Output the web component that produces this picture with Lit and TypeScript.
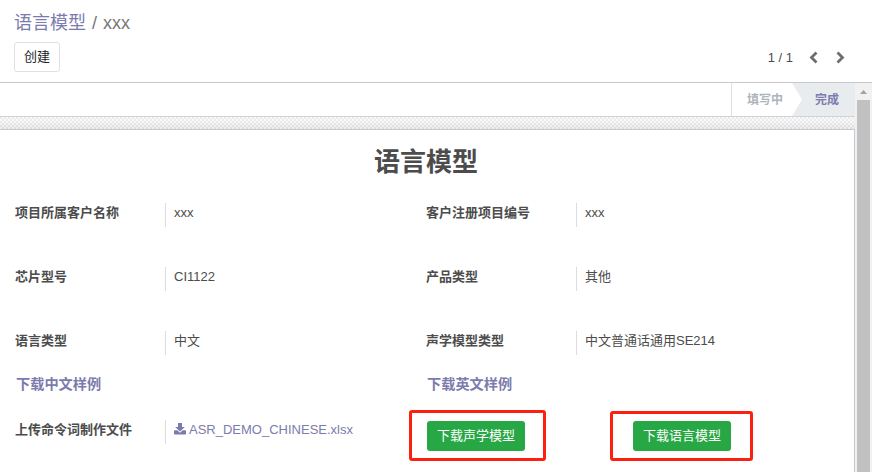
import { LitElement, html, css, nothing } from "lit";
import { customElement, property } from "lit/decorators.js";

@customElement("form-field")
class FormField extends LitElement {
  @property() label = "";
  @property() value = "";
  @property({ type: Boolean }) file = false;

  static styles = css`
    :host { display: flex; height: 24px; line-height: 19px; font-size: 13px; color: #4c4c4c; }
    .label { width: 150px; flex: none; font-weight: bold; white-space: nowrap; }
    .value { border-left: 1px solid #ddd; padding-left: 8px; white-space: nowrap; }
    .link { color: #7c7bad; display: flex; }
    .icon { width: 12px; height: 12px; margin: 3px 3px 0 0; fill: currentColor; }
  `;

  render() {
    return html`
      <div class="label">${this.label}</div>
      <div class="value ${this.file ? "link" : ""}">
        ${this.file
          ? html`<svg class="icon" viewBox="0 0 12 12">
              <path d="M4 0h4v4h2.9L6 8.6 1.1 4H4zM.6 7.3h2.7L6 9.8l2.7-2.5h2.7q.6 0 .6.6v2.9q0 .6-.6.6H.6q-.6 0-.6-.6V7.900q0-.6.6-.6z"></path>
            </svg>`
          : nothing}<span>${this.value}</span>
      </div>
    `;
  }
}

@customElement("app-root")
class AppRoot extends LitElement {
  static styles = css`
    :host {
      display: flex; flex-direction: column; width: 872px; height: 472px; overflow: hidden;
      background: #fff; color: #4c4c4c; box-sizing: border-box;
      font-family: "Liberation Sans", "Noto Sans CJK SC", sans-serif; font-size: 13px;
    }
    * { box-sizing: border-box; }
    .panel { height: 83px; flex: none; padding: 10px 14px 0; border-bottom: 1px solid #c8c8ca; }
    .crumbs { display: flex; gap: 6px; height: 26px; line-height: 26px; font-size: 18px; color: #777; white-space: nowrap; }
    .crumbs a { color: #7c7bad; }
    .tools { display: flex; justify-content: space-between; margin-top: 6px; height: 30px; }
    .create {
      width: 46px; height: 30px; padding: 0; border: 1px solid #dee0e4; border-radius: 3px; background: #fff;
      font: inherit; color: #212529; line-height: 28px;
    }
    .pager { display: flex; align-items: center; margin-right: 13px; height: 31px; }
    .pager svg { width: 9px; height: 13px; fill: none; stroke: #6b6e70; stroke-width: 2.8; }
    .prev { margin-left: 16px; }
    .next { margin-left: 18px; }
    .body { display: flex; flex: 1; min-height: 0; }
    .content {
      width: 855px; display: flex; flex-direction: column;
      background:
        linear-gradient(transparent 38px, rgba(0, 0, 0, 0.06) 46px) 0 0 / 100% 100% no-repeat,
        repeating-conic-gradient(#eaeaea 0 25%, #fafafa 0 50%) 0 0 / 4px 4px;
    }
    .status { display: flex; justify-content: flex-end; height: 34px; flex: none; background: #fff; border-bottom: 1px solid #ced4da; font-size: 12px; font-weight: bold; line-height: 35px; }
    .step { width: 61px; padding-left: 15px; border-left: 1px solid #dee2e6; color: #adb5bd; }
    .step.done { width: 63px; padding-left: 23px; border: 0; color: #7c7bad; background: #e9ecef; clip-path: polygon(0 0, 100% 0, 100% 100%, 0 100%, 10px 50%); }
    .sheet { margin-top: 12px; flex: 1; min-height: 0; background: #fff; border: solid #c8c8d3; border-width: 1px 1px 0 0; }
    h1 { margin: 0; padding: 12px 2px 0 0; height: 73px; line-height: 40px; font-size: 26px; text-align: center; }
    .grid { display: grid; grid-template-columns: 411px 1fr; row-gap: 40px; padding-left: 15px; }
    .samples { display: grid; grid-template-columns: 411px 1fr; margin-top: 18px; padding-left: 16px; height: 24px; line-height: 22px; font-size: 14.2px; font-weight: bold; color: #7c7bad; }
    .files { display: flex; align-items: flex-start; margin-top: 13px; padding-left: 15px; }
    .files form-field { width: 394px; margin-top: 10px; }
    .mark { display: flex; flex: none; width: 137px; height: 51px; border: 3px solid #fb2010; border-radius: 3px; padding: 8px 0 0 15px; }
    .mark + .mark { width: 143px; height: 50px; margin: 1px 0 0 64px; padding: 7px 0 0 20px; }
    .mark button { width: 98px; height: 30px; padding: 0; border: 0; border-radius: 3px; background: #28a745; color: #fff; font: inherit; line-height: 30px; }
    .scroll { width: 17px; background: #f1f1f1; padding: 7px 2px 0; }
    .up { width: 7px; height: 4px; margin: 0 3px 0; background: #a3a3a3; clip-path: polygon(50% 0, 100% 100%, 0 100%); }
    .thumb { height: 400px; margin-top: 6px; background: #c1c1c1; }
  `;

  render() {
    return html`
      <div class="panel">
        <div class="crumbs"><a>语言模型</a><span>/</span><span>xxx</span></div>
        <div class="tools">
          <button class="create">创建</button>
          <div class="pager">
            <span>1 / 1</span>
            <svg class="prev" viewBox="0 0 9 13"><path d="M7.5 1.5 2.5 6.5l5 5"></path></svg>
            <svg class="next" viewBox="0 0 9 13"><path d="m1.5 1.5 5 5-5 5"></path></svg>
          </div>
        </div>
      </div>
      <div class="body">
        <div class="content">
          <div class="status"><div class="step">填写中</div><div class="step done">完成</div></div>
          <div class="sheet">
            <h1>语言模型</h1>
            <div class="grid">
              <form-field label="项目所属客户名称" value="xxx"></form-field>
              <form-field label="客户注册项目编号" value="xxx"></form-field>
              <form-field label="芯片型号" value="CI1122"></form-field>
              <form-field label="产品类型" value="其他"></form-field>
              <form-field label="语言类型" value="中文"></form-field>
              <form-field label="声学模型类型" value="中文普通话通用SE214"></form-field>
            </div>
            <div class="samples"><a>下载中文样例</a><a>下载英文样例</a></div>
            <div class="files">
              <form-field label="上传命令词制作文件" value="ASR_DEMO_CHINESE.xlsx" file></form-field>
              <div class="mark"><button>下载声学模型</button></div>
              <div class="mark"><button>下载语言模型</button></div>
            </div>
          </div>
        </div>
        <div class="scroll"><div class="up"></div><div class="thumb"></div></div>
      </div>
    `;
  }
}
